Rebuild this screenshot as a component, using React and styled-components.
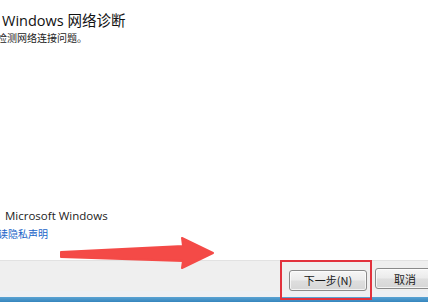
import React from "react";
import styled, { createGlobalStyle } from "styled-components";

const GlobalStyle = createGlobalStyle`
  html, body {
    margin: 0;
    padding: 0;
    overflow: hidden;
    background: #fff;
  }
`;

const Window = styled.div`
  position: relative;
  width: 428px;
  height: 302px;
  display: flex;
  flex-direction: column;
  overflow: hidden;
  background: #fff;
  font-family: "Open Sans", "Noto Sans CJK SC", sans-serif;
  color: #1e1e1e;
`;

const Content = styled.div`
  flex: 1;
  display: flex;
  flex-direction: column;
  padding: 11px 0 19px 2px;
`;

const Title = styled.h1`
  margin: 0;
  font-size: 14.5px;
  font-weight: 400;
  line-height: 19px;
  color: #111;
`;

const Subtitle = styled.p`
  margin: 1px 0 0 -5px;
  font-size: 10px;
  line-height: 14px;
  color: #222;
`;

const Bottom = styled.div`
  margin-top: auto;
  display: flex;
  flex-direction: column;
  gap: 4px;
`;

const Copyright = styled.div`
  padding-left: 3px;
  font-size: 11.5px;
  line-height: 14px;
  color: #222;
`;

const PrivacyLink = styled.a`
  margin-left: -4px;
  font-size: 10px;
  line-height: 14px;
  color: #1a64c8;
  text-decoration: none;
`;

const Footer = styled.div`
  display: flex;
  flex-direction: column;
`;

const ButtonBar = styled.div`
  height: 31px;
  box-sizing: border-box;
  display: flex;
  align-items: flex-start;
  gap: 8px;
  padding: 7px 0 0 289px;
  background: #efefef;
  border-top: 1px solid #e2e2e2;
`;

const Strip = styled.div`
  height: 6px;
  background: #eef0f4;
`;

const BlueBar = styled.div`
  height: 5px;
  background: linear-gradient(#5aa3d4, #3585bd);
`;

const ButtonSlot = styled.div`
  position: relative;
  flex: none;
`;

const Highlight = styled.div`
  position: absolute;
  top: -8px;
  left: -9px;
  right: -5px;
  bottom: -9px;
  border: 2.5px solid #e2323d;
  pointer-events: none;
`;

const Button = styled.button`
  flex: none;
  width: ${(props) => props.width}px;
  height: 21px;
  padding: 0;
  border: 1px solid #8a8a8a;
  border-radius: 3px;
  background: linear-gradient(#f6f6f6 0%, #ebebeb 48%, #dedede 52%, #d6d6d6 100%);
  box-shadow: inset 0 0 0 1px rgba(255, 255, 255, 0.7);
  font-family: "Noto Sans CJK SC", "Open Sans", sans-serif;
  font-size: 11px;
  color: #1a1a1a;
`;

const Arrow = styled.svg`
  position: absolute;
  left: 58px;
  top: 235px;
  pointer-events: none;
`;

export default function App() {
  return (
    <Window>
      <GlobalStyle />
      <Content>
        <Title>Windows 网络诊断</Title>
        <Subtitle>检测网络连接问题。</Subtitle>
        <Bottom>
          <Copyright>Microsoft Windows</Copyright>
          <PrivacyLink href="#">读隐私声明</PrivacyLink>
        </Bottom>
      </Content>
      <Footer>
        <ButtonBar>
          <ButtonSlot>
            <Button width={78}>下一步(N)</Button>
            <Highlight />
          </ButtonSlot>
          <Button width={60}>取消</Button>
        </ButtonBar>
        <Strip />
        <BlueBar />
      </Footer>
      <Arrow width="160" height="36" viewBox="0 0 160 36">
        <polygon
          points="3,17 125,11 124,3 155,18 124,33 125,26 3,22"
          fill="#f44a47"
          stroke="#f44a47"
          strokeWidth="2"
          strokeLinejoin="round"
        />
      </Arrow>
    </Window>
  );
}
